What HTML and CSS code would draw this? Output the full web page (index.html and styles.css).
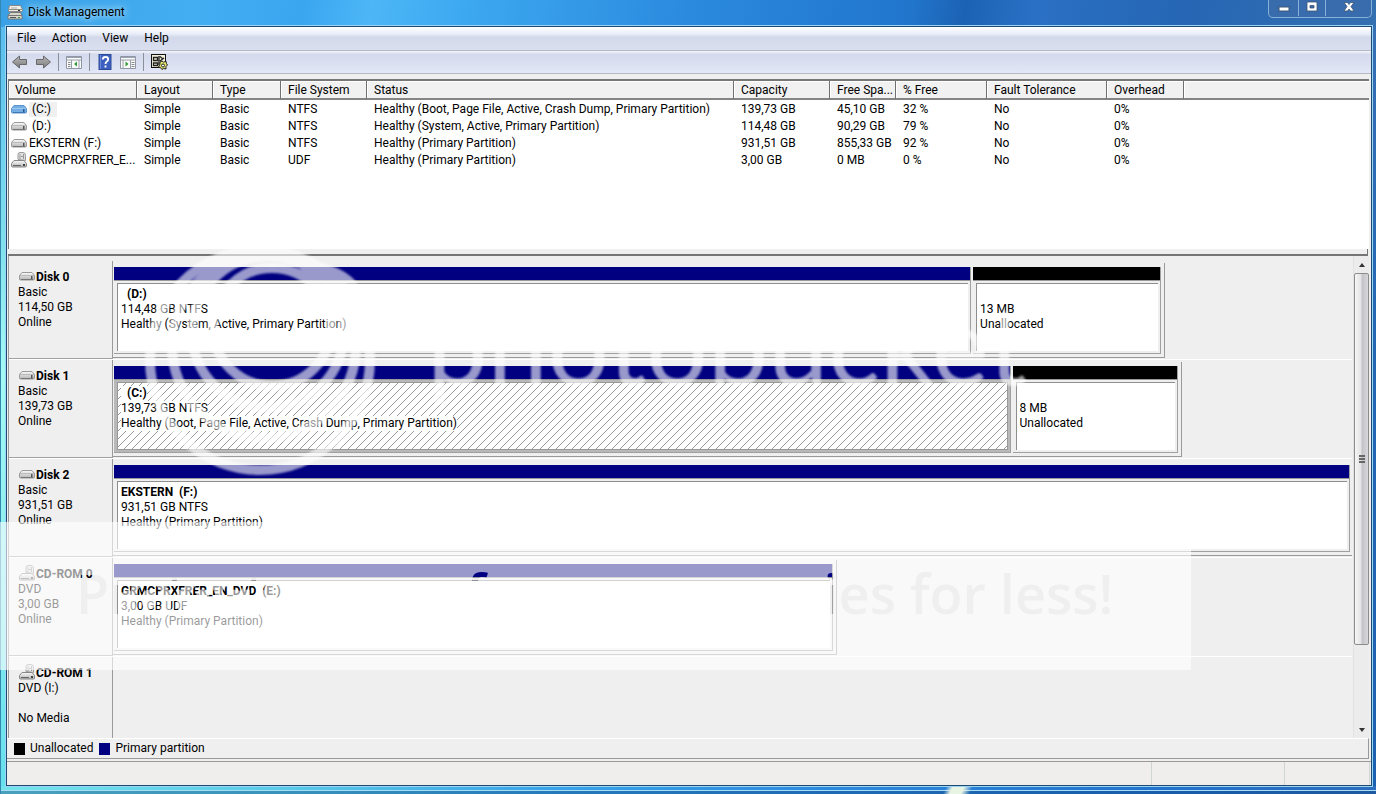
FILE: index.html
```html
<!DOCTYPE html>
<html lang="en">
<head>
<meta charset="utf-8">
<title>Disk Management</title>
<link rel="stylesheet" href="styles.css">
</head>
<body>
<svg class="defs" aria-hidden="true">
  <defs>
    <linearGradient id="metal" x1="0" y1="0" x2="0" y2="1"><stop offset="0" stop-color="#fafafa"/><stop offset="1" stop-color="#b4b4b4"/></linearGradient>
    <linearGradient id="arrow" x1="0" y1="0" x2="0" y2="1"><stop offset="0" stop-color="#b8b8b8"/><stop offset="1" stop-color="#7c7c7c"/></linearGradient>
    <symbol id="drive" viewBox="0 0 16 16">
      <path d="M3 4.500h10l2.500 3v3.500q0 1-1 1h-13q-1 0-1-1v-3.500z" fill="url(#metal)" stroke="#9a9a9a"/>
      <path d="M1 7.500h14" stroke="#bbb"/><path d="M2 11.500h12" stroke="#777"/><rect x="12" y="8" width="1.500" height="3" fill="#555"/>
    </symbol>
    <symbol id="drive-blue" viewBox="0 0 16 16">
      <path d="M3 4.500h10l2.500 3v3.500q0 1-1 1h-13q-1 0-1-1v-3.500z" fill="#74aee4" stroke="#5a92cc"/>
      <path d="M1 7.500h14" stroke="#98c8ee"/><path d="M2 11.500h12" stroke="#3f78b4"/><rect x="12" y="8" width="1.500" height="3" fill="#225c9c"/>
    </symbol>
    <symbol id="cdrom" viewBox="0 0 16 16">
      <path d="M7 7.500v-5q0-2 2-2h3q2.500 0 2.500 3v5z" fill="#e2e2e2" stroke="#999"/>
      <path d="M9 2v5M12.500 2v5M10 4.500h2" stroke="#999"/>
      <path d="M3 8.500h10l2.500 3v2.500q0 1-1 1h-13q-1 0-1-1v-2.500z" fill="url(#metal)" stroke="#888"/>
      <path d="M2 13.500h8" stroke="#666"/><rect x="12" y="12" width="2" height="2" fill="#444"/>
    </symbol>
  </defs>
</svg>
<main class="window">
  <header class="titlebar">
    <svg class="app-icon" viewBox="0 0 16 16" aria-hidden="true">
      <path d="M2.500 1.500h11l2 4v2h-14v-2z" fill="#f0f0e8" stroke="#888"/><path d="M2 5.500h13" stroke="#8c8c80"/><path d="M4 4h6" stroke="#aaa"/>
      <path d="M3.500 8.500h10l1.500 3v3.500h-14v-3.500z" fill="#d8d8cc" stroke="#777"/><path d="M1 11.500h14" stroke="#777"/><path d="M3 13.500h6" stroke="#555"/><path d="M11 13.500h2" stroke="#3b8d3b"/><path d="M11 6.500h2" stroke="#333"/>
    </svg>
    <h1 class="title">Disk Management</h1>
    <div class="captions">
      <button class="cap cap-min" aria-label="Minimize"><svg viewBox="0 0 14 14"><rect x="2" y="7" width="10" height="4" fill="#fff" stroke="#3c5675"/></svg></button>
      <button class="cap cap-max" aria-label="Maximize"><svg viewBox="0 0 14 14"><path d="M2 2h10v9h-10zM5 5.500v2.500h4v-2.500z" fill="#fff" fill-rule="evenodd" stroke="#3c5675" stroke-width=".8"/></svg></button>
      <button class="cap cap-close" aria-label="Close"><svg viewBox="0 0 14 14"><path d="M2 2.500h3.500l1.500 2 1.500-2h3.500l-3 4 3 4.500h-3.500l-1.500-2-1.500 2h-3.500l3-4.500z" fill="#fff" stroke="#3c5675" stroke-width=".8"/></svg></button>
    </div>
  </header>

  <div class="client">
    <nav class="menubar"><button>File</button><button>Action</button><button>View</button><button>Help</button></nav>
    <div class="toolbar">
      <button aria-label="Back"><svg viewBox="0 0 18 18"><path d="M1.500 9l7-6v3.500h7v5h-7v3.500z" fill="url(#arrow)" stroke="#686868"/></svg></button>
      <button aria-label="Forward"><svg viewBox="0 0 18 18"><path d="M16.500 9l-7-6v3.500h-7v5h7v3.500z" fill="url(#arrow)" stroke="#686868"/></svg></button>
      <span class="sep"></span>
      <button aria-label="Show or hide console tree"><svg viewBox="0 0 18 18"><path d="M1.500 3.500h15v12h-15z" fill="#fbfbfb" stroke="#8f97a4"/><path d="M2 4.500h14" stroke="#9ba3b3"/><path d="M2 7h14M6.500 7v8M14 7v8" stroke="#98a0aa"/><path d="M3 9.500h2.500M3 11.500h2.500M3 13.500h2.500" stroke="#888"/><path d="M12 8.500v5l-3-2.500z" fill="#2f9a36"/></svg></button>
      <span class="sep"></span>
      <button aria-label="Help"><svg viewBox="0 0 18 18"><rect x="3" y="1.500" width="12" height="15" fill="#3c60c0" stroke="#2c4a98"/><path d="M4.500 2v14" stroke="#6d8ad8"/><path d="M6.800 6.500q0-2.500 2.700-2.500t2.700 2.300q0 1.300-1.400 2.200-1.300.8-1.300 2.500M9.500 12.500v2" fill="none" stroke="#fff" stroke-width="1.800"/></svg></button>
      <button aria-label="Show or hide action pane"><svg viewBox="0 0 18 18"><path d="M1.500 3.500h15v12h-15z" fill="#fbfbfb" stroke="#8f97a4"/><path d="M2 4.500h14" stroke="#9ba3b3"/><path d="M2 7h14M4 7v8M11.500 7v8" stroke="#98a0aa"/><path d="M12.500 9.500h3M12.500 11.500h3M12.500 13.500h3" stroke="#888"/><path d="M6.500 8.500v5l3-2.500z" fill="#2f9a36"/></svg></button>
      <span class="sep"></span>
      <button aria-label="Settings"><svg viewBox="0 0 18 18"><rect x="1.500" y="1.500" width="14" height="13" fill="#f0f0dc" stroke="#111"/><path d="M3.500 4.500h4v3h-4zM10 3.500l3 2.500M3.500 10h4v2.500h-4zM10 8l4-3M9 3v9" fill="none" stroke="#222" stroke-width="1.300"/><path d="M10 9l2-1 1.500 1.200 2.500-1 .5 2.300 1 1.500-1.500 1.500v2.500l-2.500-.5-1.500 1-1.500-1.800-2-1 1.300-2z" fill="#e2e26c" stroke="#222"/><circle cx="13" cy="12.500" r="1.500" fill="#fff" stroke="#222"/></svg></button>
    </div>

    <section class="volumes">
      <table>
        <colgroup><col class="c1"><col class="c2"><col class="c3"><col class="c4"><col class="c5"><col class="c6"><col class="c7"><col class="c8"><col class="c9"><col class="c10"><col></colgroup>
        <thead><tr><th>Volume</th><th>Layout</th><th>Type</th><th>File System</th><th>Status</th><th>Capacity</th><th>Free Spa...</th><th>% Free</th><th>Fault Tolerance</th><th>Overhead</th><th></th></tr></thead>
        <tbody>
          <tr><td><span class="vol"><svg><use href="#drive-blue"/></svg><span class="picked">(C:)</span></span></td><td>Simple</td><td>Basic</td><td>NTFS</td><td>Healthy (Boot, Page File, Active, Crash Dump, Primary Partition)</td><td>139,73 GB</td><td>45,10 GB</td><td>32 %</td><td>No</td><td>0%</td><td></td></tr>
          <tr><td><span class="vol"><svg><use href="#drive"/></svg><span class="nolabel">(D:)</span></span></td><td>Simple</td><td>Basic</td><td>NTFS</td><td>Healthy (System, Active, Primary Partition)</td><td>114,48 GB</td><td>90,29 GB</td><td>79 %</td><td>No</td><td>0%</td><td></td></tr>
          <tr><td><span class="vol"><svg><use href="#drive"/></svg><span>EKSTERN (F:)</span></span></td><td>Simple</td><td>Basic</td><td>NTFS</td><td>Healthy (Primary Partition)</td><td>931,51 GB</td><td>855,33 GB</td><td>92 %</td><td>No</td><td>0%</td><td></td></tr>
          <tr><td><span class="vol"><svg><use href="#cdrom"/></svg><span>GRMCPRXFRER_E...</span></span></td><td>Simple</td><td>Basic</td><td>UDF</td><td>Healthy (Primary Partition)</td><td>3,00 GB</td><td>0 MB</td><td>0 %</td><td>No</td><td>0%</td><td></td></tr>
        </tbody>
      </table>
    </section>
    <div class="splitter"></div>

    <section class="graph">
      <div class="disks">
        <article class="disk">
          <div class="info"><h2><svg><use href="#drive"/></svg>Disk 0</h2><p>Basic</p><p>114,50 GB</p><p>Online</p></div>
          <div class="lane"><div class="parts" style="width:84.900%">
            <div class="part primary" style="flex-grow:857"><div class="bar"></div><div class="box"><h3 class="unnamed">(D:)</h3><p>114,48 GB NTFS</p><p>Healthy (System, Active, Primary Partition)</p></div></div>
            <div class="part unalloc" style="flex-grow:187"><div class="bar"></div><div class="box"><h3>&nbsp;</h3><p>13 MB</p><p>Unallocated</p></div></div>
          </div></div>
        </article>
        <article class="disk">
          <div class="info"><h2><svg><use href="#drive"/></svg>Disk 1</h2><p>Basic</p><p>139,73 GB</p><p>Online</p></div>
          <div class="lane"><div class="parts" style="width:86.300%">
            <div class="part primary chosen" style="flex-grow:897"><div class="bar"></div><div class="box"><h3 class="unnamed">(C:)</h3><p>139,73 GB NTFS</p><p>Healthy (Boot, Page File, Active, Crash Dump, Primary Partition)</p></div></div>
            <div class="part unalloc" style="flex-grow:165"><div class="bar"></div><div class="box"><h3>&nbsp;</h3><p>8 MB</p><p>Unallocated</p></div></div>
          </div></div>
        </article>
        <article class="disk">
          <div class="info"><h2><svg><use href="#drive"/></svg>Disk 2</h2><p>Basic</p><p>931,51 GB</p><p>Online</p></div>
          <div class="lane"><div class="parts" style="width:100.200%">
            <div class="part primary" style="flex-grow:1"><div class="bar"></div><div class="box"><h3>EKSTERN&nbsp; (F:)</h3><p>931,51 GB NTFS</p><p>Healthy (Primary Partition)</p></div></div>
          </div></div>
        </article>
        <article class="disk">
          <div class="info"><h2><svg><use href="#cdrom"/></svg>CD-ROM 0</h2><p>DVD</p><p>3,00 GB</p><p>Online</p></div>
          <div class="lane"><div class="parts" style="width:58.400%">
            <div class="part primary" style="flex-grow:1"><div class="bar"></div><div class="box"><h3>GRMCPRXFRER_EN_DVD&nbsp; (E:)</h3><p>3,00 GB UDF</p><p>Healthy (Primary Partition)</p></div></div>
          </div></div>
        </article>
        <article class="disk">
          <div class="info"><h2><svg><use href="#cdrom"/></svg>CD-ROM 1</h2><p>DVD (I:)</p><p>&nbsp;</p><p>No Media</p></div>
          <div class="lane"></div>
        </article>
      </div>
      <div class="scrollbar">
        <button aria-label="Scroll up"><svg viewBox="0 0 6 4"><path d="M0 4h6l-3-4z" fill="#333"/></svg></button>
        <div class="track"><div class="thumb"><i></i><i></i><i></i></div></div>
        <button aria-label="Scroll down"><svg viewBox="0 0 6 4"><path d="M0 0h6l-3 4z" fill="#333"/></svg></button>
      </div>
    </section>

    <div class="legend"><span class="key key-un"></span>Unallocated<span class="key key-pr"></span>Primary partition</div>
    <footer class="status"><span></span><span class="s2"></span><span class="s3"></span><span class="s4"></span></footer>
  </div>
</main>

<svg class="watermark" width="1376" height="794" aria-hidden="true">
  <defs>
    <filter id="soft"><feGaussianBlur stdDeviation="1"/></filter>
    <mask id="slogan" maskUnits="userSpaceOnUse" x="0" y="500" width="1376" height="200"><rect x="0" y="522" width="1191" height="148" fill="#fff"/><text class="slogan" x="76" y="614" fill="#000">Protect more of your memories for less!</text></mask>
  </defs>
  <rect x="0" y="522" width="1191" height="148" fill="#fff" fill-opacity=".6" mask="url(#slogan)"/>
  <g opacity=".6" filter="url(#soft)">
    <g fill="none" stroke="#fff" stroke-width="10">
      <circle cx="260" cy="360" r="110"/><circle cx="264" cy="346" r="92"/><circle cx="268" cy="332" r="76"/><circle cx="272" cy="327" r="59"/>
    </g>
    <path d="M318 262Q346 268 358 284L316 284Q308 274 296 271z" fill="#fff"/>
    <text class="brand" x="427" y="385" fill="#fff">photobucket</text>
  </g>
</svg>
</body>
</html>
```
FILE: styles.css
```css
* { box-sizing: border-box; }
body { margin: 0; font: 12px/15px Roboto, "Open Sans", sans-serif; color: #000; }
h1, h2, h3, p { margin: 0; font-size: inherit; font-weight: 400; }
button { border: 0; padding: 0; background: none; font: inherit; color: inherit; }
svg { display: block; flex: none; }
.defs { position: absolute; width: 0; height: 0; }

.window {
  display: flex; flex-direction: column; min-height: 100vh; padding: 0 4px 8px 6px;
  background:
    linear-gradient(115deg, transparent 858px, #e8f4e4 864px 874px, transparent 882px) bottom / 100% 8px no-repeat,
    linear-gradient(transparent 4px, #a8dcf4 4px 5px, #0a3c7866 5px) bottom / 100% 8px no-repeat,
    linear-gradient(100deg, #3aa0e6 0%, #44aef2 14%, #3aa6f0 22%, #4cb6f6 27%, #3ca8f0 34%, #2b8ade 50%, #2176cc 66%, #1c62b4 70%, #2a70c4 75%, #2666b4 86%, #3470b0 100%) top / 100% 27px no-repeat,
    linear-gradient(90deg, #74e4ec 0%, #58cce8 20%, #38a4e8 40%, #2c8ade 60%, #2272cc 85%, #2c6cbc 100%) bottom / 100% 8px no-repeat,
    linear-gradient(#55b8ee, #7ee0ec 30%, #a4fbf4 47%, #8aeeee 70%, #64e0ee) left / 10px 100% no-repeat,
    linear-gradient(#3870b4, #2468b4 40%, #1c60b0) right / 10px 100% no-repeat;
  box-shadow: inset 1px 0 #3488b0;
}
.titlebar { display: flex; align-items: flex-start; height: 26px; }
.app-icon { width: 16px; height: 16px; margin: 4px 5px 0 1px; }
.title { flex: 1; padding-top: 4px; line-height: 16px; text-shadow: 0 0 6px #b8e4fc, 0 0 10px #b8e4fc; }
.captions { display: flex; height: 18px; border: 1px solid #86b0d8; border-top: 0; border-radius: 0 0 5px 5px; background: #386cac; }
.cap { display: flex; justify-content: center; height: 16px; }
.cap + .cap { border-left: 1px solid #86b0d8; }
.cap svg { width: 14px; height: 14px; }
.cap-min { width: 29px; }
.cap-max { width: 27px; }
.cap-close { width: 46px; }

.client { flex: 1; display: flex; flex-direction: column; border: 1px solid #1d4a72; background: #efefef; box-shadow: 0 0 0 1px #9cd4f4; }
.menubar { display: flex; height: 24px; padding-left: 10px; gap: 16px; align-items: center; background: linear-gradient(#fff, #e8edf8 30%, #d3d9ea 45%, #dadff0); border-bottom: 1px solid #b4b8c4; }
.toolbar { display: flex; height: 23px; padding: 0 4px; gap: 5px; align-items: center; background: linear-gradient(#f4f6fc, #d4daec 15%, #e2e6f6); border-bottom: 1px solid #b4b8c0; }
.toolbar svg { width: 18px; height: 18px; }
.sep { width: 1px; height: 18px; margin: 0 1px; background: #8a8f9a; }

.volumes { height: 170px; margin: 5px 2px 0 1px; background: #fff; border-top: 2px solid #777; border-left: 1px solid #777; overflow: hidden; }
table { width: 100%; table-layout: fixed; border-collapse: separate; border-spacing: 0; line-height: 15px; }
th, td { padding: 2px 0 0 7px; text-align: left; font-weight: 400; white-space: nowrap; }
th { height: 19px; background: #f1f1f1; border-bottom: 2px solid #858585; border-right: 1px solid #707070; box-shadow: inset 1px 1px #fff; }
th:first-child { padding-left: 6px; }
th:last-child { border-right: 0; }
td { height: 17px; }
td:first-child { padding-left: 2px; }
.c1 { width: 128px; } .c2 { width: 76px; } .c3 { width: 68px; } .c4 { width: 86px; } .c5 { width: 367px; }
.c6 { width: 96px; } .c7 { width: 66px; } .c8 { width: 91px; } .c9 { width: 120px; } .c10 { width: 77px; }
.vol { display: flex; align-items: center; gap: 2px; height: 15px; }
.vol svg { width: 16px; height: 16px; margin-top: -2px; }
.picked { padding: 0 6px 0 3px; background: #f0f0f0; }
.nolabel { padding-left: 3px; }
.splitter { height: 7px; margin: 0 3px 0 1px; background: #efefef; border-bottom: 2px solid #757575; border-right: 1px solid #757575; }

.graph { flex: 1 1 0; min-height: 0; display: flex; margin: 0 2px 0 1px; overflow: hidden; border-left: 1px solid #999; }
.disks { flex: 1; padding-top: 5px; overflow: hidden; }
.disk { display: flex; height: 99px; border-bottom: 1px solid #fff; }
.info { width: 104px; padding: 9px 0 0 9px; border-right: 1px solid #9a9a9a; border-bottom: 1px solid #a2a2a2; }
.info h2 { display: flex; align-items: center; height: 15px; font-weight: 700; }
.info svg { width: 16px; height: 16px; margin: -4px 1px 0 1px; }
.lane { flex: 1; padding: 2px 0 0; }
.parts { display: flex; height: 95px; padding: 4px 3px 3px 1px; border-right: 1px solid #9a9a9a; border-bottom: 1px solid #9a9a9a; }
.part { flex: 1 1 0; display: flex; flex-direction: column; border-right: 1px solid #a0a0a0; border-bottom: 1px solid #a0a0a0; }
.part + .part { margin-left: 2px; }
.bar { height: 14px; border-bottom: 1px solid #999; }
.primary .bar { background: #000080; }
.unalloc .bar { background: #000; }
.box { flex: 1; margin: 2px 2px 2px 3px; padding: 3px 0 0 3px; background: #fff; border-top: 1px solid #8e8e8e; border-left: 1px solid #8e8e8e; white-space: nowrap; }
.box h3 { font-weight: 700; }
.box .unnamed { padding-left: 6px; }
.chosen { background: #b8b8b8; }
.chosen .box { border: 1px solid #999; background: linear-gradient(135deg, #fff 46%, #999 46% 54%, #fff 54%) 0 0 / 8px 8px; }
.chosen .box h3, .chosen .box p { width: max-content; background: #fff; }

.scrollbar { display: flex; flex-direction: column; width: 16px; margin-left: 1px; background: #ececec; border-left: 1px solid #e2e2e2; }
.scrollbar button { display: flex; justify-content: center; align-items: center; height: 17px; }
.scrollbar button svg { width: 6px; height: 4px; }
.track { flex: 1; }
.thumb { display: flex; flex-direction: column; justify-content: center; align-items: center; gap: 1px; height: 83%; border: 1px solid #8c8c8c; border-radius: 2px; background: linear-gradient(90deg, #f6f6f6, #e4e4e6 45%, #c4c4c8 55%, #d8d8dc); }
.thumb i { width: 6px; height: 2px; background: #666; }

.legend { display: flex; align-items: center; height: 21px; margin: 0 2px 0 0; padding-left: 7px; border-top: 1px solid #fff; border-bottom: 1px solid #999; border-right: 1px solid #999; }
.key { width: 11px; height: 12px; margin: 0 5px 0 6px; }
.key-un { margin-left: 0; background: #000; }
.key-pr { background: #000080; }
.status { display: flex; height: 24px; margin-top: 2px; border-top: 1px solid #999; background: #f0eded; }
.status span { flex: 1; }
.status .s2, .status .s3, .status .s4 { flex: none; border-left: 1px solid #d0d4d4; }
.status .s2 { width: 133px; } .status .s3 { width: 85px; } .status .s4 { width: 2px; }

.watermark { position: absolute; left: 0; top: 0; pointer-events: none; }
.slogan { font: 600 54px "Open Sans", sans-serif; }
.brand { font: 400 108px Lato, sans-serif; }
```
